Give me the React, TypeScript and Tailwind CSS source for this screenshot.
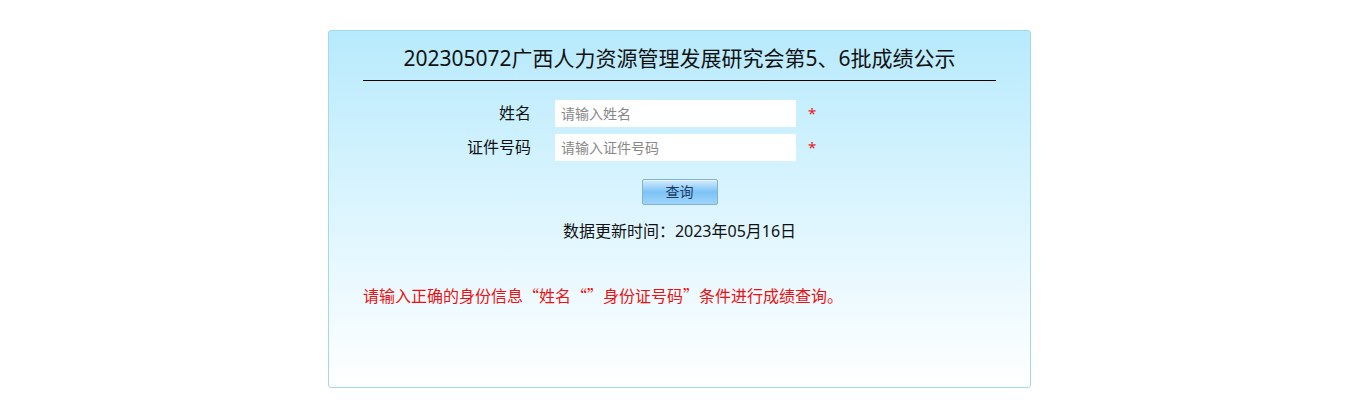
import React, { useState } from "react";

const font = { fontFamily: '"Noto Sans", "Noto Sans CJK SC", sans-serif' };

const App: React.FC = () => {
  const [name, setName] = useState("");
  const [idNo, setIdNo] = useState("");

  return (
    <div className="min-h-[403px] w-full bg-white pt-[30px]" style={font}>
      <div className="ml-[328px] h-[358px] w-[703px] rounded-[3px] border border-[#a3dbe4] bg-gradient-to-b from-[#b7eafd] to-white px-[34px] pt-[12px]">
        {/* Title */}
        <div className="border-b border-black pb-[7px] text-center text-[21px] leading-[30px] text-[#111]">
          202305072广西人力资源管理发展研究会第5、6批成绩公示
        </div>

        {/* Form */}
        <div className="mt-[19px] flex flex-col gap-[7px]">
          <div className="flex items-center">
            <label className="w-[168px] text-right text-[16px] leading-[27px] text-[#111]">姓名</label>
            <input
              value={name}
              onChange={(e) => setName(e.target.value)}
              placeholder="请输入姓名"
              className="ml-[24px] h-[27px] w-[241px] bg-white pl-[6px] text-[14px] text-[#333] outline-none placeholder:text-[#888]"
            />
            <span className="ml-[12px] text-[15px] leading-none text-[#e8161a]">*</span>
          </div>
          <div className="flex items-center">
            <label className="w-[168px] text-right text-[16px] leading-[27px] text-[#111]">证件号码</label>
            <input
              value={idNo}
              onChange={(e) => setIdNo(e.target.value)}
              placeholder="请输入证件号码"
              className="ml-[24px] h-[27px] w-[241px] bg-white pl-[6px] text-[14px] text-[#333] outline-none placeholder:text-[#888]"
            />
            <span className="ml-[12px] text-[15px] leading-none text-[#e8161a]">*</span>
          </div>
        </div>

        {/* Button */}
        <div className="mt-[18px] flex justify-center">
          <button className="h-[26px] w-[76px] rounded-[2px] border border-[#7fb1d3] bg-gradient-to-b from-[#d2ecfd] via-[#7cc3f6] to-[#9fd4fa] text-[14px] leading-none text-[#1d3b63] shadow-[inset_0_1px_0_#eaf6ff]">
            查询
          </button>
        </div>

        {/* Update time */}
        <div className="mt-[14px] text-center text-[16px] leading-[24px] text-[#111]">
          数据更新时间：2023年05月16日
        </div>

        {/* Notice */}
        <div className="mt-[40px] font-['Noto_Sans_CJK_SC',sans-serif] text-[16px] leading-[24px] text-[#ee1111]">
          请输入正确的身份信息“姓名“”身份证号码”条件进行成绩查询。
        </div>
      </div>
    </div>
  );
};

export default App;
